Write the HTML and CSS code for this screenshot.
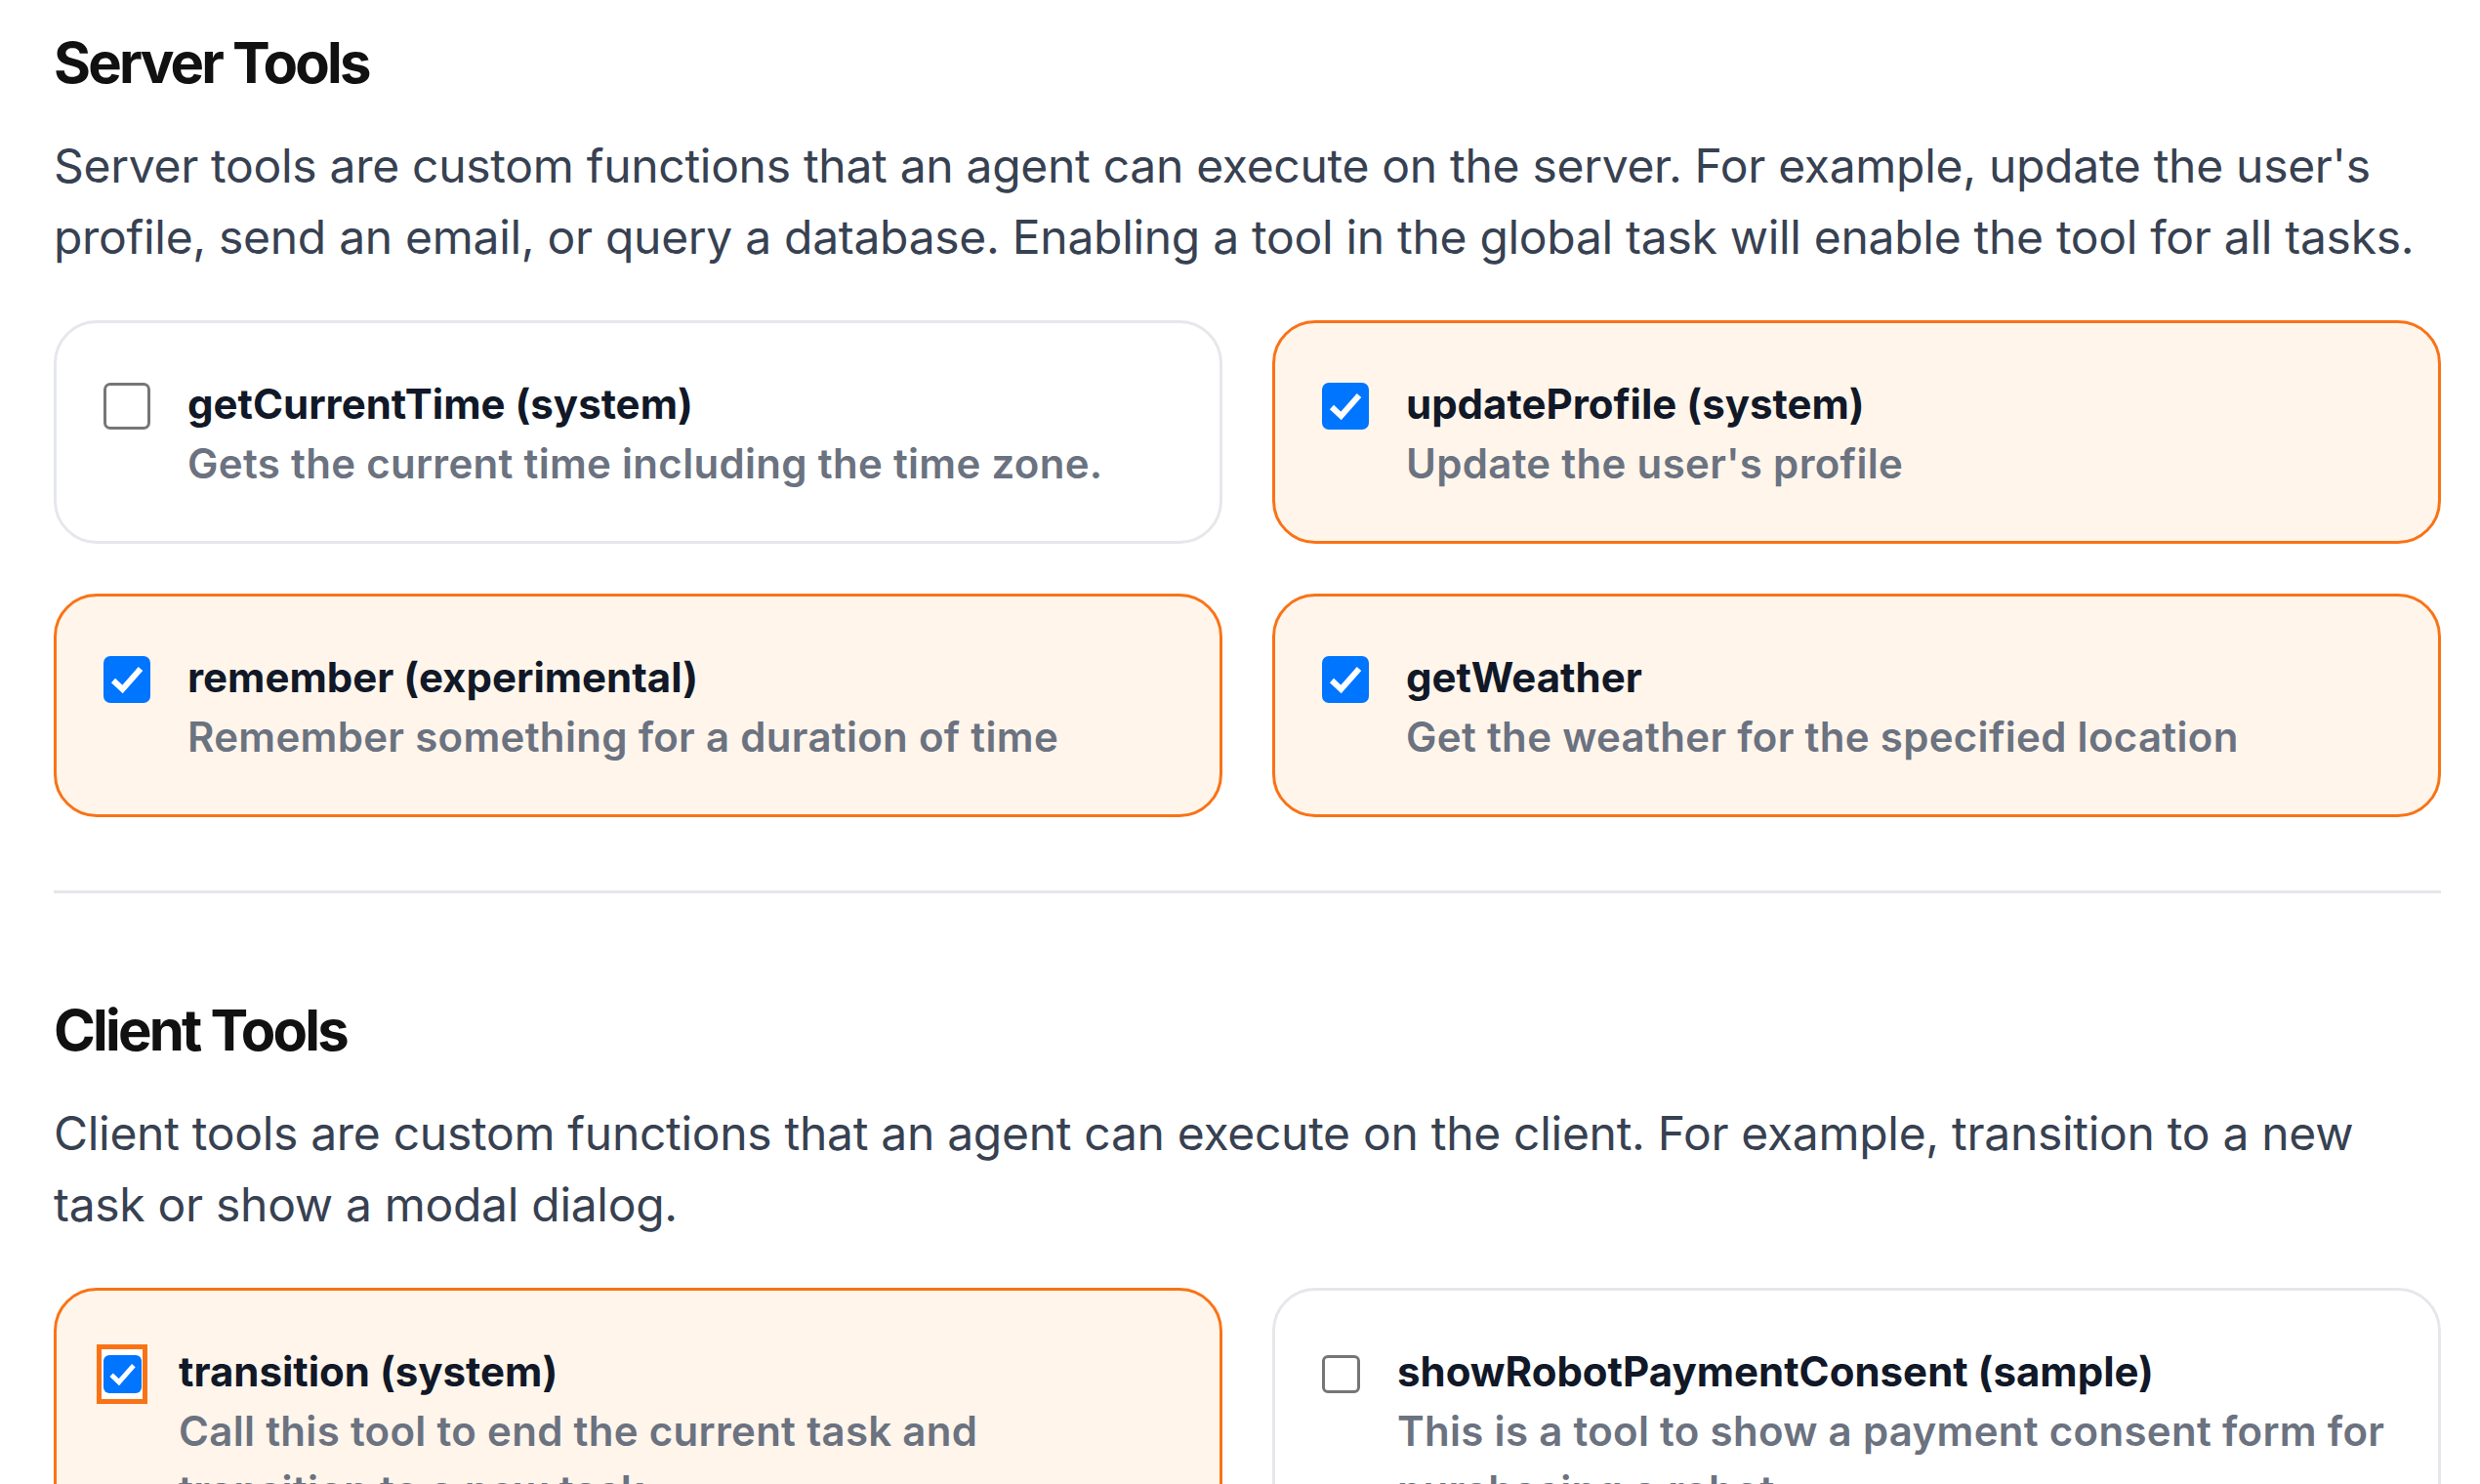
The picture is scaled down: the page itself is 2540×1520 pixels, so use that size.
FILE: index.html
```html
<!DOCTYPE html>
<html lang="en">
<head>
<meta charset="utf-8">
<title>Tools</title>
<link rel="stylesheet" href="styles.css">
</head>
<body>
<main class="page">
  <section class="section">
    <h2 class="section-title">Server Tools</h2>
    <p class="section-desc">Server tools are custom functions that an agent can execute on the server. For example, update the user's profile, send an email, or query a database. Enabling a tool in the global task will enable the tool for all tasks.</p>
    <div class="tool-grid">
      <label class="tool-card">
        <span class="cb cb-lg"></span>
        <span class="tool-text">
          <span class="tool-name">getCurrentTime (system)</span>
          <span class="tool-desc">Gets the current time including the time zone.</span>
        </span>
      </label>
      <label class="tool-card is-on">
        <span class="cb cb-lg is-checked"><svg viewBox="0 0 48 48"><path d="M10 25 L19.5 34 L38 13"/></svg></span>
        <span class="tool-text">
          <span class="tool-name">updateProfile (system)</span>
          <span class="tool-desc">Update the user's profile</span>
        </span>
      </label>
      <label class="tool-card is-on">
        <span class="cb cb-lg is-checked"><svg viewBox="0 0 48 48"><path d="M10 25 L19.5 34 L38 13"/></svg></span>
        <span class="tool-text">
          <span class="tool-name">remember (experimental)</span>
          <span class="tool-desc">Remember something for a duration of time</span>
        </span>
      </label>
      <label class="tool-card is-on">
        <span class="cb cb-lg is-checked"><svg viewBox="0 0 48 48"><path d="M10 25 L19.5 34 L38 13"/></svg></span>
        <span class="tool-text">
          <span class="tool-name">getWeather</span>
          <span class="tool-desc">Get the weather for the specified location</span>
        </span>
      </label>
    </div>
  </section>

  <hr class="divider">

  <section class="section">
    <h2 class="section-title">Client Tools</h2>
    <p class="section-desc">Client tools are custom functions that an agent can execute on the client. For example, transition to a new task or show a modal dialog.</p>
    <div class="tool-grid">
      <label class="tool-card is-on">
        <span class="cb cb-sm is-checked is-focused"><svg viewBox="0 0 48 48"><path d="M10 25 L19.5 34 L38 13"/></svg></span>
        <span class="tool-text">
          <span class="tool-name">transition (system)</span>
          <span class="tool-desc">Call this tool to end the current task and transition to a new task.</span>
        </span>
      </label>
      <label class="tool-card">
        <span class="cb cb-sm"></span>
        <span class="tool-text">
          <span class="tool-name">showRobotPaymentConsent (sample)</span>
          <span class="tool-desc">This is a tool to show a payment consent form for purchasing a robot.</span>
        </span>
      </label>
    </div>
  </section>
</main>
</body>
</html>
```

FILE: styles.css
```css
html {
  overflow: hidden;
  background: #ffffff;
}

body {
  margin: 0;
  font-family: Inter, "Noto Sans", "Liberation Sans", sans-serif;
  color: #111827;
}

.page {
  padding: 28px 40px 0 55px;
}

.section-title {
  margin: 0;
  font-size: 58px;
  line-height: 72px;
  font-weight: 700;
  letter-spacing: -2.8px;
  color: #111111;
}

.section-desc {
  margin: 33px 0 0;
  font-size: 48px;
  line-height: 73px;
  font-weight: 400;
  letter-spacing: -0.3px;
  color: #374151;
}

.tool-grid {
  margin-top: 49px;
  display: grid;
  grid-template-columns: 1fr 1fr;
  gap: 51px;
}

.tool-card {
  display: flex;
  align-items: flex-start;
  gap: 38px;
  padding: 52px 48px 49px 48px;
  border: 3px solid #e5e7eb;
  border-radius: 44px;
  background: #ffffff;
}

.tool-card.is-on {
  border-color: #f97316;
  background: #fff5eb;
}

.cb {
  position: relative;
  flex: none;
  box-sizing: border-box;
  border: 3px solid #767676;
  background: #ffffff;
}

.cb-lg {
  width: 48px;
  height: 48px;
  margin-top: 9px;
  border-radius: 7px;
}

.cb-sm {
  width: 39px;
  height: 39px;
  margin-top: 14px;
  border-radius: 6px;
}

.cb.is-checked {
  border: none;
  background: #0075ff;
}

.cb svg {
  position: relative;
  z-index: 1;
  display: block;
  width: 100%;
  height: 100%;
}

.cb svg path {
  fill: none;
  stroke: #ffffff;
  stroke-width: 6;
  stroke-linejoin: miter;
}

.cb.is-focused {
  z-index: 0;
}

.cb.is-focused::before {
  content: "";
  position: absolute;
  top: -11px;
  bottom: -11px;
  left: -7px;
  right: -6px;
  border: 5px solid #f97316;
  background: #ffffff;
  z-index: -1;
}

.cb.is-focused::after {
  content: "";
  position: absolute;
  inset: 0;
  background: #0075ff;
  border-radius: 6px;
  z-index: 0;
}

.tool-text {
  display: flex;
  flex-direction: column;
  min-width: 0;
}

.tool-name {
  font-size: 42px;
  line-height: 61px;
  font-weight: 700;
  letter-spacing: 0;
  color: #111827;
}

.tool-desc {
  font-size: 42px;
  line-height: 61px;
  font-weight: 600;
  letter-spacing: 0.3px;
  color: #6b7280;
}

.divider {
  margin: 75px 0 0;
  border: 0;
  border-top: 3px solid #e5e7eb;
  height: 0;
}

.divider + .section {
  padding-top: 104px;
}
```
